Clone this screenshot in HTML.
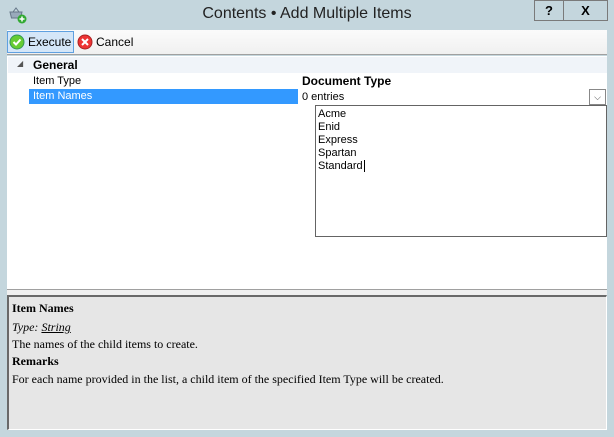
<!DOCTYPE html>
<html><head><meta charset="utf-8"><style>
*{margin:0;padding:0;box-sizing:border-box}
body{width:614px;height:437px;background:#c4d6dd;position:relative;overflow:hidden;font-family:"Liberation Sans",sans-serif;font-size:11px;color:#000}
.abs{position:absolute}
.title{left:0;top:5px;width:614px;text-align:center;font-size:16px;color:#222}
.tb{border:1px solid #7a7a7a;background:#c4d6dd;font-weight:bold;text-align:center;font-size:13px;line-height:20px}
.toolbar{left:7px;top:30px;width:600px;height:25px;background:linear-gradient(#fbfbfb,#f0f0f0);border-bottom:1px solid #a0a0a0}
.grid{left:7px;top:56px;width:600px;height:233px;background:#fff}
.desc{left:7px;top:295px;width:600px;height:135px;background:#e6e6e6;border-top:2px solid #696969;border-left:2px solid #696969;border-right:1px solid #fff;border-bottom:1px solid #fff}
.d{position:absolute;left:12px;font-family:"Liberation Serif",serif;font-size:12px;line-height:14px}
</style></head><body>
<svg class="abs" style="left:8px;top:5px" width="20" height="20" viewBox="0 0 20 20"><path d="M2 7h12l-1.5 6h-9z" fill="#9ab" stroke="#678" /><path d="M5 7l3-4 3 4" fill="none" stroke="#678"/><circle cx="14" cy="14" r="4.5" fill="#3a3"/><path d="M14 11.5v5M11.5 14h5" stroke="#fff" stroke-width="1.5"/></svg>
<div class="abs title">Contents • Add Multiple Items</div>
<div class="abs tb" style="left:534px;top:0;width:30px;height:21px">?</div>
<div class="abs tb" style="left:563px;top:0;width:45px;height:21px">X</div>
<div class="abs toolbar"></div>
<div class="abs" style="left:7px;top:31px;width:67px;height:22px;border:1px solid #5fa0e0;background:#d4e6f8"></div>
<svg class="abs" style="left:9px;top:34px" width="16" height="16"><circle cx="8" cy="8" r="7" fill="#6c3" stroke="#395"/><path d="M4.5 8l2.5 2.5 4.5-5" fill="none" stroke="#fff" stroke-width="2"/></svg>
<div class="abs" style="left:28px;top:35px;font-size:12px">Execute</div>
<svg class="abs" style="left:77px;top:34px" width="16" height="16"><circle cx="8" cy="8" r="7" fill="#e33" stroke="#a22"/><path d="M5 5l6 6M11 5l-6 6" stroke="#fff" stroke-width="2"/></svg>
<div class="abs" style="left:96px;top:35px;font-size:12px">Cancel</div>
<div class="abs grid"></div>
<div class="abs" style="left:8px;top:57px;width:599px;height:16px;background:#f0f4f9"></div>
<div class="abs" style="left:17px;top:59px;font-size:8px;color:#555">◢</div>
<div class="abs" style="left:33px;top:58px;font-weight:bold;font-size:12px">General</div>
<div class="abs" style="left:33px;top:75px">Item Type</div>
<div class="abs" style="left:302px;top:74px;font-weight:bold;font-size:12px">Document Type</div>
<div class="abs" style="left:29px;top:89px;width:269px;height:15px;background:#3399ff"></div>
<div class="abs" style="left:33px;top:90px;color:#fff">Item Names</div>
<div class="abs" style="left:302px;top:91px">0 entries</div>
<div class="abs" style="left:589px;top:89px;width:17px;height:16px;border:1px solid #888;background:#fff;font-size:9px;text-align:center;line-height:14px;color:#444">⌵</div>
<div class="abs" style="left:315px;top:105px;width:292px;height:132px;border:1px solid #646464;background:#fff;padding:2px 0 0 2px;line-height:13px">Acme<br>Enid<br>Express<br>Spartan<br>Standard<span style="border-left:1px solid #000;margin-left:1px"></span></div>
<div class="abs" style="left:7px;top:289px;width:600px;height:6px;background:#f0f0f0;border-top:1px solid #a0a0a0"></div>
<div class="abs desc"></div>
<div class="d" style="top:301px;font-weight:bold">Item Names</div>
<div class="d" style="top:320px"><i>Type: <u>String</u></i></div>
<div class="d" style="top:337px">The names of the child items to create.</div>
<div class="d" style="top:354px;font-weight:bold">Remarks</div>
<div class="d" style="top:372px">For each name provided in the list, a child item of the specified Item Type will be created.</div>
</body></html>
